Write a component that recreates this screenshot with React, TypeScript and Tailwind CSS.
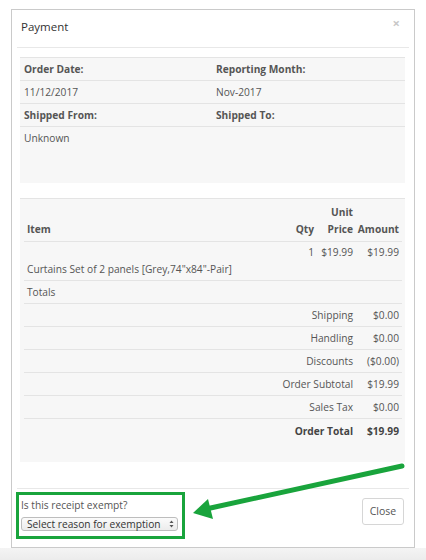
import React from 'react';

const totals = [
  { label: 'Shipping', value: '$0.00' },
  { label: 'Handling', value: '$0.00' },
  { label: 'Discounts', value: '($0.00)' },
  { label: 'Order Subtotal', value: '$19.99' },
  { label: 'Sales Tax', value: '$0.00' },
];

function InfoRow({ left, right, bold, tall }: { left: string; right?: string; bold?: boolean; tall?: boolean }) {
  return (
    <div
      className={
        'flex px-[4px] ' +
        (tall ? 'h-[56px] pt-[4px]' : 'h-[23px] pt-[1px] items-center border-b border-[#e4e4e4]') +
        (bold ? ' font-bold' : '')
      }
    >
      <div className="w-[192px]">{left}</div>
      <div>{right}</div>
    </div>
  );
}

export default function App() {
  return (
    <div className="relative w-[426px] h-[560px] bg-white overflow-hidden flex flex-col font-['Open_Sans',sans-serif] text-[10.2px] text-[#555]">
      <div className="pt-[9px] px-[11px]">
        <div className="h-[539px] border border-[#cacaca] bg-white flex flex-col">
          {/* header */}
          <div className="mx-[5px] h-[38px] border-b border-[#e8e8e8] flex items-center justify-between pl-[4px] pr-[9px] pb-[3px]">
            <span className="text-[11.5px] text-[#333]">Payment</span>
            <span className="text-[13px] font-bold text-[#c8c8c8] leading-none -mt-[8px]">×</span>
          </div>

          {/* body */}
          <div className="flex-1 px-[8px] pt-[9px] pr-[9px]">
            <div className="bg-[#f7f7f7] border-t border-[#e4e4e4]">
              <InfoRow left="Order Date:" right="Reporting Month:" bold />
              <InfoRow left="11/12/2017" right="Nov-2017" />
              <InfoRow left="Shipped From:" right="Shipped To:" bold />
              <InfoRow left="Unknown" tall />
            </div>

            <div className="mt-[15px] bg-[#f7f7f7] border-t border-[#e4e4e4] pl-[4px] pr-[3px] pb-[20px]">
              {/* head */}
              <div className="flex items-end h-[43px] pb-[3px] border-b border-[#e4e4e4] font-bold leading-[17px] px-[3px]">
                <div className="flex-1">Item</div>
                <div className="w-[30px] text-right">Qty</div>
                <div className="w-[39px] text-right">
                  Unit
                  <br />
                  Price
                </div>
                <div className="w-[46px] text-right">Amount</div>
              </div>
              {/* item */}
              <div className="flex h-[39px] pt-[2px] border-b border-[#e4e4e4] leading-[17px] px-[3px]">
                <div className="flex-1 flex flex-col">
                  <span>&nbsp;</span>
                  <span>Curtains Set of 2 panels [Grey,74"x84"-Pair]</span>
                </div>
                <div className="w-[30px] text-right">1</div>
                <div className="w-[39px] text-right">$19.99</div>
                <div className="w-[46px] text-right">$19.99</div>
              </div>
              <div className="h-[23px] pt-[1px] flex items-center border-b border-[#e4e4e4] px-[3px]">Totals</div>
              {totals.map((t) => (
                <div key={t.label} className="h-[23px] pt-[2px] flex items-center justify-end border-b border-[#e4e4e4] px-[3px]">
                  <div className="text-right">{t.label}</div>
                  <div className="w-[46px] text-right">{t.value}</div>
                </div>
              ))}
              <div className="h-[23px] pt-[2px] flex items-center justify-end px-[3px] font-bold text-[#444]">
                <div className="text-right">Order Total</div>
                <div className="w-[46px] text-right">$19.99</div>
              </div>
            </div>
          </div>

          {/* footer */}
          <div className="mx-[5px] h-[59px] border-t border-[#e8e8e8] flex justify-between pt-[3px]">
            <div className="-ml-[1px] w-[169px] h-[47px] border-[3px] border-[#19a43c] pl-[2px] pt-[3px]">
              <div className="text-[#555] leading-[15px]">Is this receipt exempt?</div>
              <div className="mt-[4px] w-[157px] h-[14px] rounded-[3px] border border-[#bdbdbd] bg-gradient-to-b from-[#fbfbfb] to-[#ececec] flex items-center justify-between pl-[5px] pr-[3px] text-[#333] leading-none">
                <span>Select reason for exemption</span>
                <svg width="5" height="8" viewBox="0 0 5 8">
                  <path d="M2.5 0.5 L4.5 3 L0.5 3 Z" fill="#555" />
                  <path d="M2.5 7.5 L4.5 5 L0.5 5 Z" fill="#555" />
                </svg>
              </div>
            </div>
            <div className="pt-[6px] pr-[5px]">
              <div className="w-[42px] h-[27px] rounded-[3px] border border-[#d6d6d6] bg-white flex items-center justify-center text-[10.5px] text-[#555]">
                Close
              </div>
            </div>
          </div>
        </div>
      </div>
      <div className="flex-1 bg-gradient-to-b from-[#f4f4f4] to-[#ececec]" />

      {/* annotation arrow */}
      <svg className="absolute inset-0 pointer-events-none" width="426" height="560" viewBox="0 0 426 560">
        <line x1="402" y1="466" x2="206" y2="509" stroke="#19a43c" strokeWidth="5" strokeLinecap="round" />
        <polygon points="193,513 208,499 213,519" fill="#19a43c" />
      </svg>
    </div>
  );
}
